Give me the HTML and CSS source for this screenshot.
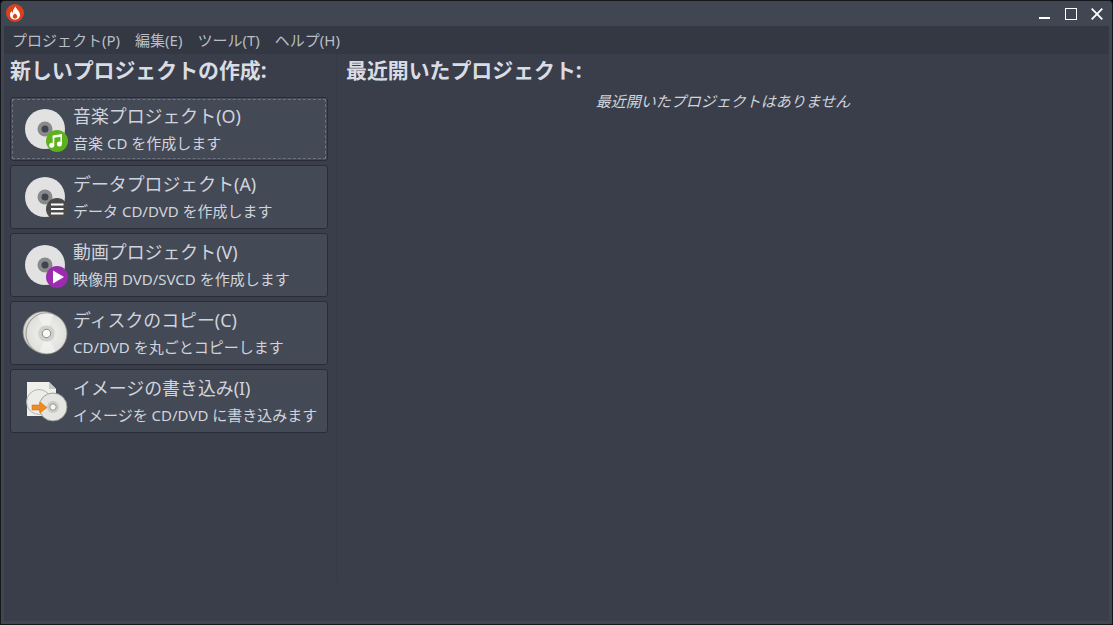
FILE: index.html
```html
<!DOCTYPE html>
<html lang="ja">
<head>
<meta charset="utf-8">
<title>Brasero</title>
<link rel="stylesheet" href="styles.css">
</head>
<body>
<svg class="defs" width="0" height="0" aria-hidden="true">
  <defs>
    <radialGradient id="cd" cx="50%" cy="50%" r="50%">
      <stop offset="0" stop-color="#cfcfcc"/><stop offset="0.5" stop-color="#e9e9e6"/><stop offset="1" stop-color="#dededa"/>
    </radialGradient>
    <g id="disc">
      <circle cx="20" cy="20" r="20" fill="#e2e2e2"/>
      <circle cx="20" cy="20" r="7.5" fill="#8a8a8a"/>
      <circle cx="20" cy="20" r="3.5" fill="#3f4450"/>
    </g>
  </defs>
</svg>
<div class="window">
  <header class="titlebar">
    <svg class="app-icon" width="18" height="18" viewBox="0 0 18 18">
      <circle cx="9" cy="9" r="9" fill="#d8431b"/>
      <path d="M9.5 2.5c.6 2.4 4.500 4.600 4.500 8.400 0 2.700-2.200 4.600-5 4.600s-5-1.900-5-4.600c0-1.700.8-2.900 1.700-3.800.2 1 .6 1.500 1.200 1.800C6.700 6.300 8 4.300 9.500 2.500z" fill="#fff"/>
      <path d="M9 9.500c-1.500 1-2.200 2-2.200 3.200 0 1.100 1 1.800 2.200 1.800s2.200-.7 2.200-1.800c0-1.200-.7-2.200-2.200-3.200z" fill="#d8431b"/>
    </svg>
    <div class="win-controls">
      <svg width="12" height="12" viewBox="0 0 12 12"><rect x="0" y="9" width="11" height="2" fill="#fff"/></svg>
      <svg width="12" height="12" viewBox="0 0 12 12"><rect x=".5" y=".5" width="11" height="11" fill="none" stroke="#fff"/></svg>
      <svg width="12" height="12" viewBox="0 0 12 12"><path d="M.7.7l10.600 10.600M11.300.7L.7 11.300" stroke="#fff" stroke-width="1.800" fill="none"/></svg>
    </div>
  </header>
  <div class="inner">
    <nav class="menubar">
      <span>プロジェクト(P)</span><span>編集(E)</span><span>ツール(T)</span><span>ヘルプ(H)</span>
    </nav>
    <main class="content">
      <section class="left">
        <h2>新しいプロジェクトの作成:</h2>
        <div class="buttons">
          <button class="proj focused">
            <svg class="ico" width="46" height="46" viewBox="0 0 46 46">
              <use href="#disc"/>
              <circle cx="32" cy="32" r="11" fill="#5cb21c"/>
              <path d="M28.500 27v9M36.200 25.800v9" fill="none" stroke="#fff" stroke-width="1.600"/>
              <path d="M27.700 26.600l9.300-1.600v2.500l-9.300 1.600z" fill="#fff"/>
              <circle cx="26.700" cy="36.200" r="2.500" fill="#fff"/><circle cx="34.400" cy="35" r="2.500" fill="#fff"/>
            </svg>
            <span class="txt"><span class="t">音楽プロジェクト(O)</span><span class="s">音楽 CD を作成します</span></span>
          </button>
          <button class="proj">
            <svg class="ico" width="46" height="46" viewBox="0 0 46 46">
              <use href="#disc"/>
              <circle cx="32" cy="32" r="11" fill="#4a4a4a"/>
              <path d="M26 27.500h12.500M26 32h12.500M26 36.500h12.500" stroke="#fff" stroke-width="2" fill="none"/>
            </svg>
            <span class="txt"><span class="t">データプロジェクト(A)</span><span class="s">データ CD/DVD を作成します</span></span>
          </button>
          <button class="proj">
            <svg class="ico" width="46" height="46" viewBox="0 0 46 46">
              <use href="#disc"/>
              <circle cx="32" cy="32" r="11" fill="#9c2bb0"/>
              <path d="M28 25.500l11 6.500-11 6.500z" fill="#fff"/>
            </svg>
            <span class="txt"><span class="t">動画プロジェクト(V)</span><span class="s">映像用 DVD/SVCD を作成します</span></span>
          </button>
          <button class="proj">
            <svg class="ico" width="46" height="46" viewBox="0 0 46 46">
              <circle cx="18.500" cy="19" r="20.500" fill="#d8d8d2" stroke="#85857e" stroke-width=".7"/>
              <circle cx="21.500" cy="20.500" r="20.500" fill="url(#cd)" stroke="#85857e" stroke-width=".8"/>
              <path d="M21.500 20.500L12.500 2.500a20 20 0 0 1 16-1zM21.500 20.500l9 18a20 20 0 0 1-16 0z" fill="#f4f4f2" opacity=".7"/>
              <circle cx="21.500" cy="20.500" r="8" fill="#cfcfcb"/>
              <circle cx="21.500" cy="20.500" r="4.200" fill="#f8f8f8" stroke="#8a8a85"/>
            </svg>
            <span class="txt"><span class="t">ディスクのコピー(C)</span><span class="s">CD/DVD を丸ごとコピーします</span></span>
          </button>
          <button class="proj">
            <svg class="ico" width="46" height="46" viewBox="0 0 46 46">
              <path d="M2 1h22l7 7v27H2z" fill="#efefec"/>
              <path d="M24 1l7 7h-7z" fill="#c9c9c4"/>
              <circle cx="14" cy="21" r="12.500" fill="#ecece9" stroke="#a5a5a0" stroke-width=".8"/>
              <circle cx="28" cy="26" r="14" fill="#e4e4e0" stroke="#8f8f89" stroke-width=".8"/>
              <circle cx="28" cy="26" r="6" fill="#cbcbc7"/>
              <circle cx="28" cy="26" r="3.200" fill="#f4f4f2" stroke="#85857f" stroke-width=".8"/>
              <path d="M7 24h8v-3l7 5.500-7 5.500v-3H7z" fill="#f08a24" stroke="#c96c12" stroke-width=".5"/>
            </svg>
            <span class="txt"><span class="t">イメージの書き込み(I)</span><span class="s">イメージを CD/DVD に書き込みます</span></span>
          </button>
        </div>
      </section>
      <section class="right">
        <h2>最近開いたプロジェクト:</h2>
        <p class="empty">最近開いたプロジェクトはありません</p>
      </section>
    </main>
  </div>
</div>
</body>
</html>
```
FILE: styles.css
```css
* { box-sizing: border-box; }
html, body { margin: 0; height: 100%; }
body {
  background: #000;
  font-family: "Noto Sans", "Noto Sans CJK JP", sans-serif;
  color: #d0d4dc;
  overflow: hidden;
}
.defs { display: block; width: 0; height: 0; }
.window {
  width: 1113px;
  height: 625px;
  border: 1px solid #15171b;
  border-radius: 4px 4px 0 0;
  background: #404652;
  display: flex;
  flex-direction: column;
}
.titlebar {
  height: 25px;
  flex: none;
  display: flex;
  align-items: center;
  justify-content: space-between;
  padding: 1px 9px 0 5px;
}
.app-icon { display: block; margin-bottom: 2px; }
.win-controls { display: flex; align-items: center; gap: 14px; }
.win-controls svg { display: block; }
.inner {
  flex: 1;
  margin: 0 3px 3px;
  background: #3a3e4b;
  display: flex;
  flex-direction: column;
  min-height: 0;
}
.menubar {
  height: 28px;
  flex: none;
  background: #333843;
  display: flex;
  align-items: center;
  gap: 15px;
  padding: 0 8px 2px;
  font-size: 15px;
  color: #b9bdc6;
}
.content { flex: 1; display: flex; min-height: 0; padding-bottom: 40px; }
.left { width: 333px; flex: none; border-right: 1px solid #363a46; padding: 1px 8px 0 6px; }
.right { flex: 1; padding: 1px 9px 0; }
h2 {
  margin: 0;
  font-size: 20.900px;
  line-height: 30px;
  font-weight: 700;
  color: #d9dce2;
}
.buttons { display: flex; flex-direction: column; gap: 4px; margin-top: 12px; }
.proj {
  height: 64px;
  width: 100%;
  display: flex;
  align-items: flex-start;
  padding: 0;
  background: #444956;
  border: 1px solid #2a2d36;
  border-radius: 3px;
  font: inherit;
  color: inherit;
  text-align: left;
  position: relative;
}
.focused::after {
  content: "";
  position: absolute;
  inset: 1px;
  border: 1px dashed #6d727e;
}
.ico { flex: none; margin: 11px 0 0 14px; overflow: visible; }
.txt { display: flex; flex-direction: column; margin-left: 2px; }
.t { font-size: 17.900px; line-height: 26px; margin-top: 5px; }
.s { font-size: 15px; line-height: 20px; margin-top: 4px; }
.empty {
  margin: 6px 0 0;
  font-size: 15px;
  font-style: italic;
  line-height: 20px;
  text-align: center;
}
```
